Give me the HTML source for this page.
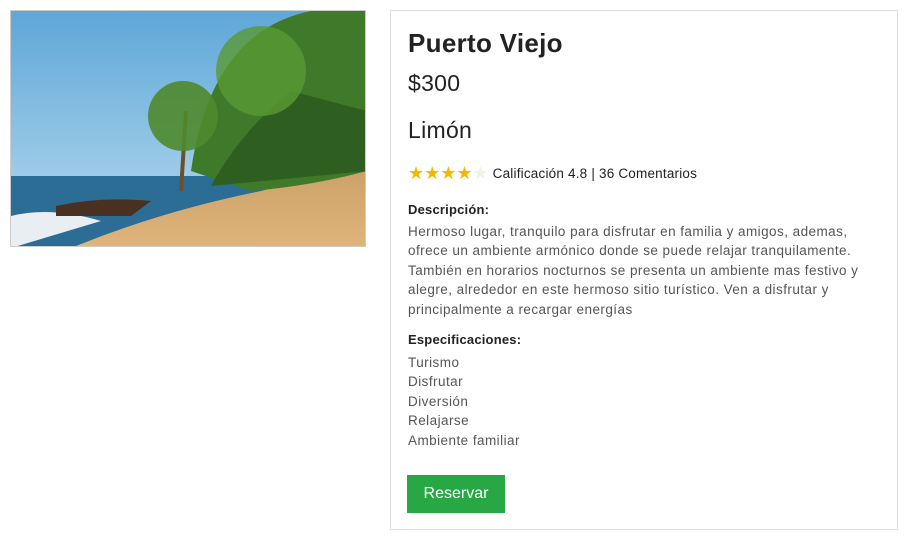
<!DOCTYPE html>
<html><head><meta charset="utf-8"><style>
body{margin:0;background:#fff;font-family:"Liberation Sans",sans-serif;width:907px;height:543px;overflow:hidden;position:relative}
.img{position:absolute;left:10px;top:10px;width:356px;height:237px;border:1px solid #ccc;box-sizing:border-box;overflow:hidden}
.card{position:absolute;left:390px;top:10px;width:508px;height:520px;border:1px solid #ddd;box-sizing:border-box}
.t{position:absolute;left:17px;white-space:nowrap}
h1{margin:0;font-size:26px;font-weight:bold;color:#222;letter-spacing:.3px}
.p{font-size:13.5px;color:#555;line-height:19.4px;letter-spacing:.45px}
.h{font-size:13px;color:#222;font-weight:bold;letter-spacing:.2px}
.btn{position:absolute;left:16px;top:464px;width:98px;height:38px;background:#28a745;color:#fff;font-size:16px;text-align:center;line-height:38px}
.st{color:#f5b800;font-size:18px;letter-spacing:0;vertical-align:-1px}
</style></head><body>
<div class="img"><svg width="356" height="237" viewBox="0 0 356 237">
<defs><linearGradient id="s" x1="0" y1="0" x2="0" y2="1"><stop offset="0" stop-color="#5ea7d8"/><stop offset="1" stop-color="#b9dbee"/></linearGradient>
<linearGradient id="b" x1="0" y1="0" x2="0" y2="1"><stop offset="0" stop-color="#c9a068"/><stop offset="1" stop-color="#e0b47a"/></linearGradient></defs>
<rect width="356" height="237" fill="url(#s)"/>
<rect y="165" width="356" height="72" fill="#2b6d94"/>
<path d="M0 205 Q40 195 90 210 L0 237Z" fill="#e8eef2"/>
<path d="M60 237 Q150 200 250 180 L356 150 L356 237Z" fill="url(#b)"/>
<path d="M45 195 Q90 185 140 190 L120 205 Q80 205 45 205Z" fill="#4a3020"/>
<path d="M180 160 Q200 20 300 0 L356 0 L356 160 Q300 175 240 180Z" fill="#3f7a2a"/>
<path d="M200 175 Q230 120 280 80 L356 100 L356 160Z" fill="#2f5f20"/>
<path d="M170 180 L175 100" stroke="#6b5030" stroke-width="4"/>
<circle cx="172" cy="105" r="35" fill="#4f8a2e" opacity=".9"/>
<circle cx="250" cy="60" r="45" fill="#5a9a35" opacity=".8"/>
</svg></div>
<div class="card">
<h1 class="t" style="top:17px">Puerto Viejo</h1>
<div class="t" style="top:59px;font-size:23px;color:#222;letter-spacing:.3px">$300</div>
<div class="t" style="top:106px;font-size:23px;color:#222;letter-spacing:.3px">Limón</div>
<div class="t" style="top:152px;font-size:13.5px;color:#222;letter-spacing:.2px"><span class="st">★★★★<span style="color:#eef3ea">★</span></span> Calificación 4.8 | 36 Comentarios</div>
<div class="t h" style="top:191px">Descripción:</div>
<div class="t p" style="top:211px">Hermoso lugar, tranquilo para disfrutar en familia y amigos, ademas,<br>ofrece un ambiente armónico donde se puede relajar tranquilamente.<br>También en horarios nocturnos se presenta un ambiente mas festivo y<br>alegre, alrededor en este hermoso sitio turístico. Ven a disfrutar y<br>principalmente a recargar energías</div>
<div class="t h" style="top:321px">Especificaciones:</div>
<div class="t p" style="top:342px">Turismo<br>Disfrutar<br>Diversión<br>Relajarse<br>Ambiente familiar</div>
<div class="btn">Reservar</div>
</div>
</body></html>
